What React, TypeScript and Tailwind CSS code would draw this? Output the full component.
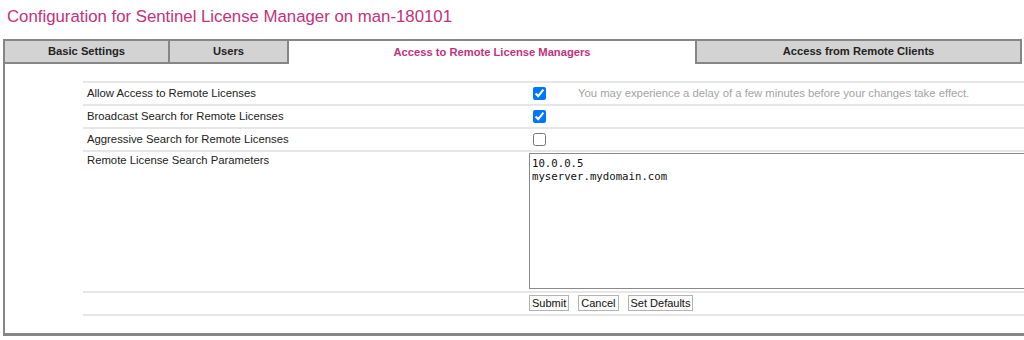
import React from 'react'

const tabBase = 'flex items-center justify-center text-[11.2px] font-bold h-[25px]'

const Row: React.FC<{ label: string; children?: React.ReactNode; tall?: boolean }> = ({ label, children, tall }) => (
  <div className={`flex border-t-2 border-[#e6e6e6] ${tall ? 'h-[141px]' : 'h-[23px]'}`}>
    <div className={`w-[446px] pl-[4px] text-[11.3px] text-[#222] ${tall ? 'leading-[14px] pt-[1px]' : 'flex items-center'}`}>
      {label}
    </div>
    <div className={`flex-1 ${tall ? 'pt-[0px]' : 'flex items-center'}`}>{children}</div>
  </div>
)

export default function App() {
  return (
    <div className="w-[1024px] h-[340px] overflow-hidden bg-white font-['Liberation_Sans',Arial,sans-serif]">
      <h1 className="pl-[7px] pt-[6px] text-[16.8px] leading-[22px] text-[#c4317b]">
        Configuration for Sentinel License Manager on man-180101
      </h1>

      <div className="mt-[11px] ml-[3px] w-[1060px] border-l-2 border-b-[3px] border-[#868686]">
        {/* tabs */}
        <div className="flex">
          <div className={`${tabBase} w-[165px] border-t-2 border-r-2 border-b-2 border-[#868686] bg-[#d3d3d3] text-[#222]`}>
            Basic Settings
          </div>
          <div className={`${tabBase} w-[119px] border-2 border-l-0 border-[#868686] bg-[#d3d3d3] text-[#222]`}>
            Users
          </div>
          <div className={`${tabBase} w-[406px] border-t-2 border-[#868686] bg-white text-[#c4317b]`}>
            Access to Remote License Managers
          </div>
          <div className={`${tabBase} w-[327px] border-2 border-[#868686] bg-[#d3d3d3] text-[#222]`}>
            Access from Remote Clients
          </div>
        </div>

        {/* settings table */}
        <div className="pt-[17px] pb-[17px] pl-[78px]">
          <Row label="Allow Access to Remote Licenses">
            <input type="checkbox" defaultChecked className="ml-[4px] w-[13px] h-[13px]" />
            <span className="ml-[32px] text-[11.3px] text-[#a3a3a3]">
              You may experience a delay of a few minutes before your changes take effect.
            </span>
          </Row>
          <Row label="Broadcast Search for Remote Licenses">
            <input type="checkbox" defaultChecked className="ml-[4px] w-[13px] h-[13px]" />
          </Row>
          <Row label="Aggressive Search for Remote Licenses">
            <input type="checkbox" className="ml-[4px] w-[13px] h-[13px]" />
          </Row>
          <Row label="Remote License Search Parameters" tall>
            <textarea
              defaultValue={'10.0.0.5\nmyserver.mydomain.com'}
              className="block mt-[1px] w-[520px] h-[136px] resize-none border border-[#8a8a8a] px-[2px] py-[3px] text-[10.7px] leading-[13px] text-[#111] font-['DejaVu_Sans_Mono',monospace]"
            />
          </Row>
          <div className="flex h-[25px] border-y-2 border-[#e6e6e6]">
            <div className="w-[446px]" />
            <div className="flex items-start gap-[9px] pt-[2px]">
              {['Submit', 'Cancel', 'Set Defaults'].map((b) => (
                <button
                  key={b}
                  className="h-[16px] px-[2px] border border-[#b4b4b4] bg-[#fbfbfb] text-[11px] leading-[14px] text-[#111]"
                >
                  {b}
                </button>
              ))}
            </div>
          </div>
        </div>
      </div>
    </div>
  )
}
